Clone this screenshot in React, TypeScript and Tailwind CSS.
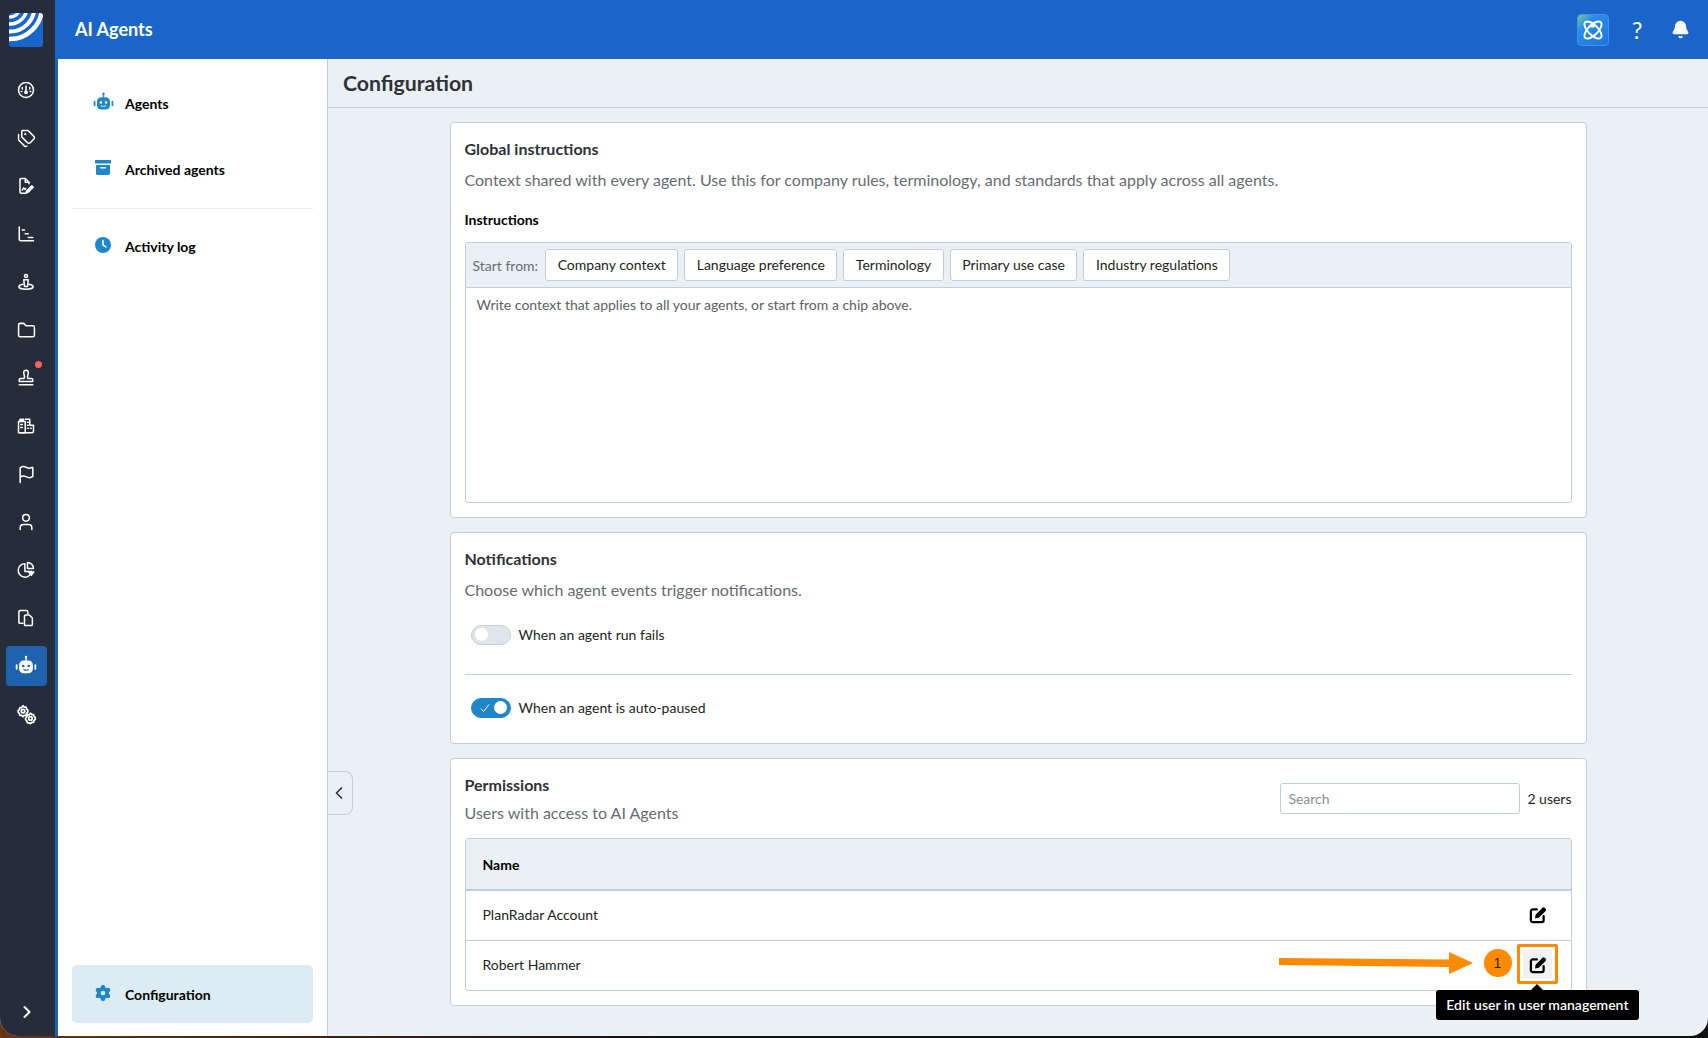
import { Bell, ChevronLeft, ChevronRight, Flag, Folder, Settings, Tags, User } from 'lucide-react';
import type { ReactNode } from 'react';

function Svg({ children, size = 18 }: { children: ReactNode; size?: number }) {
  return (
    <svg width={size} height={size} viewBox="0 0 24 24" fill="none" stroke="currentColor" strokeWidth="2" strokeLinecap="round" strokeLinejoin="round">
      {children}
    </svg>
  );
}

function Logo() {
  return (
    <svg width="34" height="34" viewBox="0 0 34 34">
      <defs>
        <clipPath id="logo-clip">
          <rect width="34" height="34" rx="3" />
        </clipPath>
      </defs>
      <g clipPath="url(#logo-clip)">
        <rect width="34" height="34" fill="#1a65c9" />
        <g fill="none" stroke="#fff">
          <circle cx="1" cy="-6" r="10" strokeWidth="3" />
          <circle cx="1" cy="-6" r="17" strokeWidth="3.500" />
          <circle cx="1" cy="-6" r="24.500" strokeWidth="4" />
          <circle cx="1" cy="-6" r="32" strokeWidth="4.500" />
        </g>
      </g>
    </svg>
  );
}

function BotIcon({ size = 24, face = '#fff', eyes = '#252d3a' }: { size?: number; face?: string; eyes?: string }) {
  return (
    <svg width={size} height={size} viewBox="0 0 24 24">
      <rect x="11.2" y="1.500" width="1.600" height="5" fill={face} />
      <circle cx="12" cy="2" r="1.300" fill={face} />
      <rect x="4.500" y="6" width="15" height="14" rx="5" fill={face} />
      <rect x="0.800" y="10" width="2" height="6" rx="1" fill={face} />
      <rect x="21.200" y="10" width="2" height="6" rx="1" fill={face} />
      <circle cx="9" cy="12" r="1.400" fill={eyes} />
      <circle cx="15" cy="12" r="1.400" fill={eyes} />
      <path d="M9.500 15.800c1.500 1 3.500 1 5 0" stroke={eyes} strokeWidth="1.100" fill="none" strokeLinecap="round" />
    </svg>
  );
}

function EditIcon() {
  return (
    <svg width="18" height="18" viewBox="0 0 24 24" fill="none" className="relative text-black">
      <path d="M10.500 4.500H5a2.500 2.500 0 0 0-2.500 2.500v12A2.500 2.500 0 0 0 5 21.500h12a2.500 2.500 0 0 0 2.500-2.500v-5.500" stroke="currentColor" strokeWidth="3" strokeLinecap="round" />
      <path d="M8 16.500l.8-5L18 2.300a2 2 0 0 1 2.800 0l1.400 1.400a2 2 0 0 1 0 2.800L13 15.700z" fill="currentColor" />
    </svg>
  );
}

const railIcons: ReactNode[] = [
  <Svg key="gauge"><circle cx="12" cy="12" r="10" /><path d="M12 13.500V6.500M7 8.500v2M17 8.500v2M5.500 14h1M17.500 14h1" /><circle cx="12" cy="15" r="1.600" fill="currentColor" /></Svg>,
  <Tags key="tags" size={19} strokeWidth={1.9} />,
  <Svg key="file"><path d="M11 21.500H5.500A1.500 1.500 0 0 1 4 20V3.500A1.500 1.500 0 0 1 5.500 2H11l5 5v2" /><path d="M11 2v5h5" /><path d="M7 17.500l2-3 1.500 2 1-1" /><path d="M14.500 20.500l-2.500 1 .8-2.800 7-7 1.900 1.900z" fill="currentColor" /></Svg>,
  <Svg key="gantt"><path d="M3 2.500V19a2 2 0 0 0 2 2h17" /><path d="M7 6.500h3M11 11.500h4M15 16.500h6" /></Svg>,
  <Svg key="pin"><circle cx="12" cy="4" r="2" /><path d="M9 9h6l-1 9h-4z" /><path d="M8 15c-3 .6-5.500 1.800-5.500 3.200C2.500 20 7 21.500 12 21.500s9.500-1.500 9.500-3.300C21.500 16.800 19 15.600 16 15" /></Svg>,
  <Folder key="folder" size={19} strokeWidth={1.9} />,
  <Svg key="stamp"><path d="M9 4.500a3 3 0 0 1 6 0c0 3-1 4-1 6.500 0 1 .5 1.500 1.500 1.500H19a2 2 0 0 1 2 2v2H3v-2a2 2 0 0 1 2-2h3.500c1 0 1.500-.5 1.500-1.500C10 8.500 9 7.500 9 4.500z" /><path d="M3 21h18" /></Svg>,
  <Svg key="building"><path d="M2 21V6h2V3h1.500v3H7V3h1.500v3H11v15z" /><path d="M11 3h6v8h5v8a2 2 0 0 1-2 2H3.500" /><path d="M5 10h2M5 14h2M14 7h1M14 11h1M14 15h1M18 15h1" /></Svg>,
  <Flag key="flag" size={19} strokeWidth={1.9} />,
  <User key="user" size={20} strokeWidth={1.8} />,
  <Svg key="pie"><path d="M10.500 3.500A9 9 0 1 0 19.500 14H10.500z" /><path d="M14 2a8 8 0 0 1 8 8h-8z" /><path d="M15.500 14.500h7L19 19z" fill="currentColor" /></Svg>,
  <Svg key="files"><path d="M8 19H4a1.500 1.500 0 0 1-1.500-1.500v-14A1.500 1.500 0 0 1 4 2h9a1.500 1.500 0 0 1 1.500 1.500V6" /><path d="M10 9.500A1.500 1.500 0 0 1 11.500 8h5l4 4v8.500A1.500 1.500 0 0 1 19 22h-7.500a1.500 1.500 0 0 1-1.500-1.500z" /></Svg>,
];

function Cogs() {
  return (
    <Svg size={21}>
      <circle cx="8" cy="8" r="2" />
      <path d="M8 2l1.500 1.500h2l.5 2 1.500 1.500v2L12 11l-.5 2h-2L8 14.500 6.500 13h-2L4 11 2.500 9.500v-2L4 6l.5-2h2z" />
      <circle cx="16.500" cy="16.500" r="2" />
      <path d="M16.500 10.500l1.500 1.500h2l.5 2 1.500 1.500v2l-1.500 1.500-.5 2h-2l-1.500 1.500L15 21.500h-2l-.5-2-1.500-1.500v-2l1.500-1.500.5-2h2z" />
    </Svg>
  );
}

function Rail() {
  return (
    <div className="flex w-[55px] shrink-0 flex-col items-center bg-[#252d3a] pr-[3px] text-white">
      <div className="mt-[13px] mb-[19px] h-[34px]">
        <Logo />
      </div>
      {railIcons.map((icon, i) => (
        <div key={i} className="relative flex h-[48px] w-[41px] items-center justify-center">
          {icon}
          {i === 6 && <span className="absolute top-[7px] right-[5px] h-[7px] w-[7px] rounded-full bg-[#f4645a]" />}
        </div>
      ))}
      <div className="my-[4px] flex h-[40px] w-[41px] items-center justify-center rounded-[4px] bg-[#1f62ae]">
        <BotIcon size={22} eyes="#1f62ae" />
      </div>
      <div className="flex h-[48px] w-[41px] items-center justify-center">
        <Cogs />
      </div>
      <div className="mt-auto mb-[14px] pl-[2px]">
        <ChevronRight size={20} strokeWidth={2.4} />
      </div>
    </div>
  );
}

function NavItem({ icon, label, active }: { icon: ReactNode; label: string; active?: boolean }) {
  return (
    <div className={`flex items-center rounded-[5px] pl-[21px] text-[14px] font-bold text-black ${active ? 'h-[58px] bg-[#dcebf4]' : 'h-[24px]'}`}>
      <span className="flex w-[32px] shrink-0 -translate-y-[1px] text-[#1f87c9]">{icon}</span>
      {label}
    </div>
  );
}

function ArchiveIcon() {
  return (
    <svg width="16" height="15" viewBox="0 0 16 15" className="ml-[2px] -translate-y-[1px]">
      <rect width="16" height="3.500" rx="0.500" fill="currentColor" />
      <path d="M1 5h14v8.500a1.500 1.500 0 0 1-1.500 1.500h-11A1.500 1.500 0 0 1 1 13.500z" fill="currentColor" />
      <rect x="5" y="7" width="6" height="1.500" rx="0.750" fill="#fff" />
    </svg>
  );
}

function ClockIcon() {
  return (
    <svg width="16" height="16" viewBox="0 0 16 16" className="ml-[2px]">
      <circle cx="8" cy="8" r="8" fill="currentColor" />
      <path d="M8 3.500V8l3 2" stroke="#fff" strokeWidth="1.500" fill="none" strokeLinecap="round" />
    </svg>
  );
}

function SideNav() {
  return (
    <aside className="flex w-[269px] shrink-0 flex-col bg-white px-[14px] pt-[32px] pb-[13px]">
      <NavItem label="Agents" icon={<BotIcon size={21} face="#1f87c9" eyes="#fff" />} />
      <div className="mt-[42px]">
        <NavItem label="Archived agents" icon={<ArchiveIcon />} />
      </div>
      <div className="mt-[27px] border-t border-[#e8ebee] pt-[25px]">
        <NavItem label="Activity log" icon={<ClockIcon />} />
      </div>
      <div className="mt-auto">
        <NavItem
          active
          label="Configuration"
          icon={<Settings size={18} fill="currentColor" stroke="currentColor" strokeWidth={1.5} className="ml-[1px] [&>circle]:fill-[#dcebf4] [&>circle]:stroke-none" />}
        />
      </div>
    </aside>
  );
}

function Card({ title, desc, children }: { title: string; desc: string; children: ReactNode }) {
  return (
    <section className="rounded-[4px] border border-[#c0cfdf] bg-white px-[14px]">
      <h2 className="mt-[14px] text-[16px] leading-[24px] font-bold text-[#2d3238]">{title}</h2>
      <p className="mt-[7px] text-[16px] leading-[24px] text-[#666c72]">{desc}</p>
      {children}
    </section>
  );
}

function Chip({ label }: { label: string }) {
  return <span className="rounded-[3px] border border-[#c0cfdf] bg-white px-[11.5px] text-[14px] leading-[30px] text-[#1c1f22]">{label}</span>;
}

function Toggle({ on, label }: { on?: boolean; label: string }) {
  return (
    <div className="flex items-center gap-[8px] pl-[6px] text-[14px] text-[#1c1f22]">
      <span className={`flex h-[20px] w-[40px] items-center rounded-full border px-[3px] ${on ? 'justify-between border-[#1f87c9] bg-[#1f87c9]' : 'border-[#c0cfdf] bg-[#e0e5ea]'}`}>
        {on && (
          <svg width="10" height="10" viewBox="0 0 10 10" className="ml-[5px]" fill="none" stroke="#fff" strokeWidth="1">
            <path d="M1 5.500l2.500 3L9 1.500" />
          </svg>
        )}
        <span className="h-[13px] w-[13px] rounded-full bg-white" />
      </span>
      {label}
    </div>
  );
}

function UserRow({ name, children }: { name: string; children?: ReactNode }) {
  return (
    <div className="relative flex h-[50px] items-center justify-between border-t border-[#c0cfdf] pr-[24px] pb-[2px] pl-[17px] text-[14px] text-[#1c1f22]">
      {name}
      {children}
      <EditIcon />
    </div>
  );
}

export default function App() {
  return (
    <div className="h-[1038px] w-[1708px] overflow-hidden bg-[linear-gradient(to_right,#6b3410,#111_40%)] font-['Lato',sans-serif]">
      <div className="flex h-[1036px] overflow-hidden rounded-b-[18px] bg-[#ebf0f5]">
        <Rail />
        <div className="flex min-w-0 flex-1 flex-col">
          <header className="flex h-[59px] shrink-0 items-center bg-[#1a65c9] pr-[18px] pl-[20px] text-white">
            <span className="text-[18px] font-bold">AI Agents</span>
            <span className="ml-auto flex h-[32px] w-[32px] items-center justify-center rounded-[4px] border border-[#4a8fe8] bg-[linear-gradient(135deg,#6fd08c_0%,#2a8de8_28%,#1a75e0_100%)]">
              <svg width="24" height="24" viewBox="0 0 24 24" fill="none" stroke="#fff" strokeWidth="1.900">
                <ellipse cx="12" cy="12" rx="11" ry="5" transform="rotate(45 12 12)" />
                <ellipse cx="12" cy="12" rx="11" ry="5" transform="rotate(-45 12 12)" />
                <rect x="9.500" y="6" width="4" height="3.500" fill="#fff" stroke="none" />
              </svg>
            </span>
            <span className="ml-[18px] w-[20px] text-center text-[24px] leading-none">?</span>
            <Bell size={19} fill="#fff" className="ml-[24px]" />
          </header>
          <div className="flex min-h-0 flex-1 border-l-[3px] border-[#1e63b0]">
            <SideNav />
            <main className="relative flex min-w-0 flex-1 flex-col border-l border-[#c0cfdf]">
              <div className="flex h-[49px] shrink-0 items-center border-b border-[#c0cfdf] pt-[2px] pl-[15px] text-[21.25px] font-bold text-[#2d3238]">Configuration</div>
              <div className="mx-auto mt-[14px] flex w-[1137px] flex-col gap-[14px]">
                <Card title="Global instructions" desc="Context shared with every agent. Use this for company rules, terminology, and standards that apply across all agents.">
                  <div className="mt-[17px] text-[14px] leading-[22px] font-bold text-black">Instructions</div>
                  <div className="mt-[11px] mb-[14px] h-[261px] rounded-[3px] border border-[#c0cfdf]">
                    <div className="flex h-[45px] items-center gap-[6px] border-b border-[#c0cfdf] bg-[#ebf0f5] pl-[7px] text-[14px] text-[#666c72]">
                      <span className="mr-[1px]">Start from:</span>
                      {['Company context', 'Language preference', 'Terminology', 'Primary use case', 'Industry regulations'].map(c => (
                        <Chip key={c} label={c} />
                      ))}
                    </div>
                    <div className="px-[10px] pt-[7px] pl-[11px] text-[14px] leading-[20px] text-[#5c6268]">Write context that applies to all your agents, or start from a chip above.</div>
                  </div>
                </Card>
                <Card title="Notifications" desc="Choose which agent events trigger notifications.">
                  <div className="mt-[22px]"><Toggle label="When an agent run fails" /></div>
                  <div className="mt-[29px] border-t border-[#c0cfdf] pt-[22px] pb-[25px]"><Toggle on label="When an agent is auto-paused" /></div>
                </Card>
                <section className="rounded-[4px] border border-[#c0cfdf] bg-white px-[14px] pb-[14px]">
                  <div className="flex items-start justify-between pt-[14px]">
                    <div>
                      <h2 className="text-[16px] leading-[24px] font-bold text-[#2d3238]">Permissions</h2>
                      <p className="mt-[4px] text-[16px] leading-[24px] text-[#666c72]">Users with access to AI Agents</p>
                    </div>
                    <div className="mt-[10px] flex items-center text-[14px] text-[#1c1f22]">
                      <input placeholder="Search" className="h-[31px] w-[240px] rounded-[3px] border border-[#c0cfdf] px-[7px] text-[14px] placeholder:text-[#8a9096]" />
                      <span className="ml-[7px]">2 users</span>
                    </div>
                  </div>
                  <div className="mt-[13px] rounded-[3px] border border-[#c0cfdf]">
                    <div className="flex h-[51px] items-center border-b border-[#c0cfdf] bg-[#ebf0f5] pl-[17px] text-[14px] font-bold text-black">Name</div>
                    <UserRow name="PlanRadar Account" />
                    <UserRow name="Robert Hammer">
                      <span className="absolute top-[3px] right-[13px] h-[40px] w-[41px] rounded-[2px] border-[3px] border-[#ff8a00] bg-[#f2f2f2] outline-[3px] -outline-offset-[6px] outline-white" />
                      <svg width="196" height="24" viewBox="0 0 196 24" className="absolute top-[10px] right-[97px]">
                        <path d="M1 7L171 8.500V1L195 12L171 23V16L1 14z" fill="#ff8a00" />
                      </svg>
                      <span className="absolute top-[8px] right-[59px] flex h-[28px] w-[28px] items-center justify-center rounded-full bg-[#ff8a00] font-['Liberation_Sans',sans-serif] text-[14px] text-[#1c1f22]">1</span>
                      <span className="absolute top-[49px] right-[-68px] z-10 whitespace-nowrap rounded-[3px] bg-black px-[10px] text-[14px] leading-[30px] font-semibold text-white before:absolute before:top-[-6px] before:left-[95px] before:h-0 before:w-0 before:border-x-[6px] before:border-b-[6px] before:border-x-transparent before:border-b-black">Edit user in user management</span>
                    </UserRow>
                  </div>
                </section>
              </div>
              <button className="absolute top-[712px] left-0 flex h-[44px] w-[25px] items-center justify-center rounded-r-[8px] border border-l-0 border-[#c0cfdf] bg-[#ebf0f5] pr-[2px] text-[#2d3238]">
                <ChevronLeft size={20} strokeWidth={2} />
              </button>
            </main>
          </div>
        </div>
      </div>
    </div>
  );
}
